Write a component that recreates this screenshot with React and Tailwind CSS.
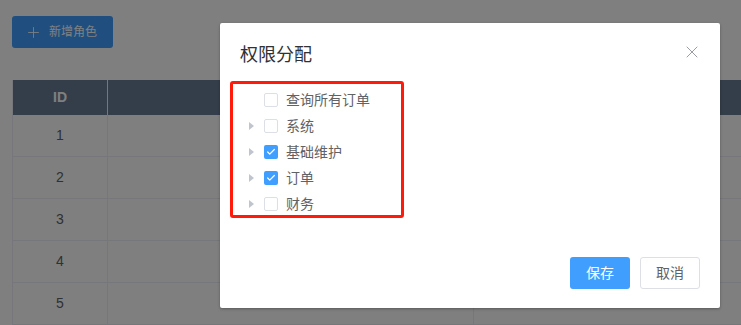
import { Plus, X, Check } from 'lucide-react';

const rows = [1, 2, 3, 4, 5];

const nodes = [
  { label: '查询所有订单', leaf: true, checked: false },
  { label: '系统', leaf: false, checked: false },
  { label: '基础维护', leaf: false, checked: true },
  { label: '订单', leaf: false, checked: true },
  { label: '财务', leaf: false, checked: false },
];

function TreeNode({ node }) {
  return (
    <div className="flex h-[26px] items-center">
      <div className="flex w-[44px] justify-end pr-[10px]">
        {!node.leaf && (
          <span className="h-0 w-0 border-y-[4px] border-l-[5px] border-y-transparent border-l-[#c0c4cc]" />
        )}
      </div>
      {node.checked ? (
        <span className="flex h-[14px] w-[14px] items-center justify-center rounded-[2px] bg-[#409eff]">
          <Check className="h-[10px] w-[10px] text-white" strokeWidth={3} />
        </span>
      ) : (
        <span className="h-[14px] w-[14px] rounded-[2px] border border-[#dcdfe6] bg-white" />
      )}
      <span className="ml-[8px] text-[14px] text-[#606266]">{node.label}</span>
    </div>
  );
}

export default function App() {
  return (
    <div className="relative h-[325px] w-[741px] overflow-hidden bg-white font-['Liberation_Sans','Noto_Sans_CJK_SC',sans-serif]">
      <div className="pl-[12px] pt-[16px]">
        <button className="flex h-[32px] w-[101px] items-center rounded-[3px] bg-[#409eff] pl-[13px] text-[12px] text-white">
          <Plus className="h-[17px] w-[17px]" strokeWidth={1.2} />
          <span className="ml-[7px]">新增角色</span>
        </button>

        <div className="mt-[32px] border-l border-[#ebeef5]">
          <div className="flex h-[35px] bg-[#687c94] text-[14px] font-bold text-[#fff]">
            <div className="flex w-[95px] items-center justify-center border-r border-[#ebeef5]">ID</div>
            <div className="w-[366px] border-r border-[#ebeef5]" />
            <div className="flex-1" />
          </div>
          {rows.map((n) => (
            <div key={n} className="flex h-[42px] border-b border-[#ebeef5] text-[14px] text-[#606266]">
              <div className="flex w-[95px] items-center justify-center border-r border-[#ebeef5]">{n}</div>
              <div className="w-[366px] border-r border-[#ebeef5]" />
              <div className="flex-1" />
            </div>
          ))}
        </div>
      </div>

      <div className="absolute inset-0 bg-black/50" />

      <div className="absolute left-[220px] top-[23px] flex h-[285px] w-[500px] flex-col rounded-[2px] bg-white shadow-[0_1px_3px_rgba(0,0,0,0.3)]">
        <div className="relative px-[20px] pt-[20px]">
          <div className="text-[18px] leading-[24px] text-[#303133]">权限分配</div>
          <X className="absolute right-[18px] top-[19px] h-[20px] w-[20px] text-[#909399]" strokeWidth={1.1} />
        </div>

        <div className="relative mt-[20px]">
          {nodes.map((node) => (
            <TreeNode key={node.label} node={node} />
          ))}
          <div className="absolute left-[10px] top-[-6px] h-[137px] w-[174px] rounded-[3px] border-[3px] border-[#ff1a0a]" />
        </div>

        <div className="mt-auto flex justify-end gap-[10px] px-[20px] pb-[19px]">
          <button className="h-[32px] w-[60px] rounded-[3px] bg-[#409eff] text-[14px] text-white">保存</button>
          <button className="h-[32px] w-[60px] rounded-[3px] border border-[#dcdfe6] bg-white text-[14px] text-[#606266]">取消</button>
        </div>
      </div>
    </div>
  );
}
